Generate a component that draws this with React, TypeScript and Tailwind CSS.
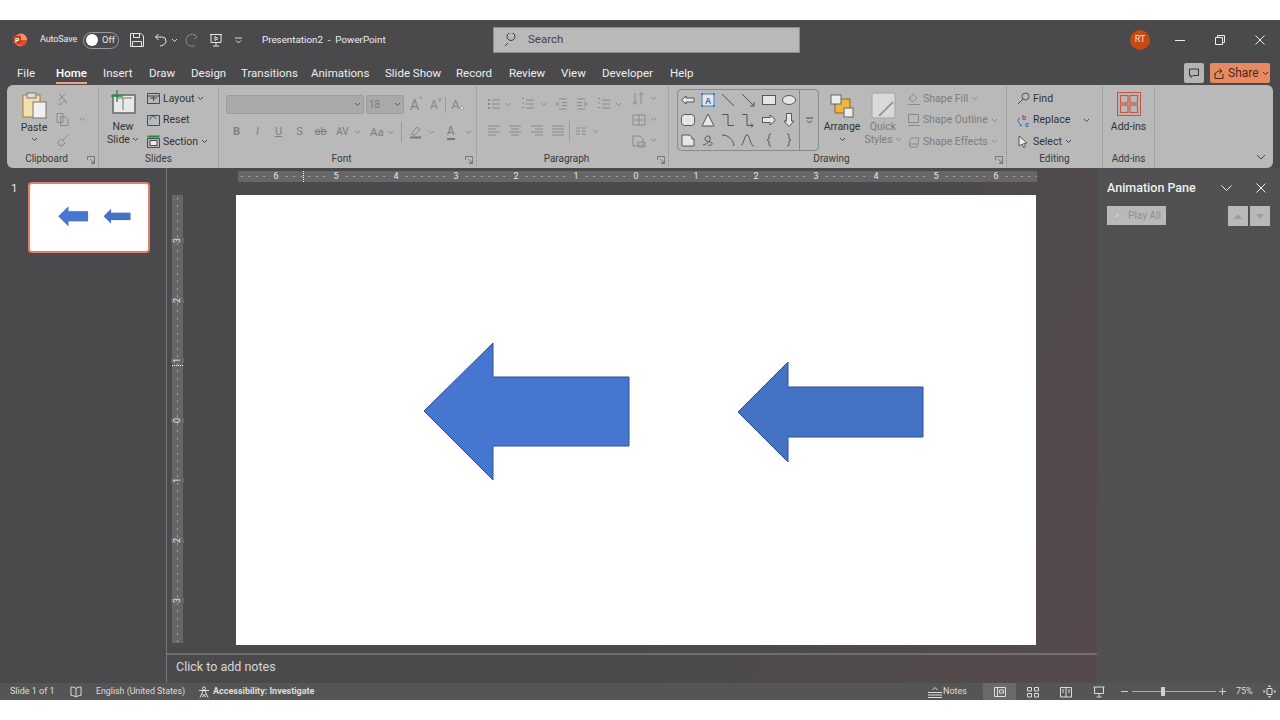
import React from "react";

const D = "#8a8a8a";
const Ic = ({ s = 14, h, c = "#4a4a4a", children, className = "" }: any) => (
  <svg width={s} height={h ?? s} viewBox={`0 0 ${s} ${h ?? s}`} fill="none" stroke={c} strokeWidth={1} className={"shrink-0 " + className}>
    {children}
  </svg>
);
const Chev = ({ c = "#4a4a4a", className = "" }: any) => (
  <svg width="7" height="5" viewBox="0 0 7 5" fill="none" stroke={c} strokeWidth={1} className={"shrink-0 " + className}>
    <path d="M1 1l2.500 2.500L6 1" />
  </svg>
);
const Arrows = () => (
  <svg viewBox="0 0 800 450" className="w-full h-full block">
    <path d="M188 216L257 148V182H393V251H257V285Z" fill="#4676cf" stroke="#2f528f" strokeWidth={1} />
    <path d="M502 217L552 167V192H687V242H552V267Z" fill="#4472c4" stroke="#2f528f" strokeWidth={1} />
  </svg>
);

const Launcher = () => (
  <svg width="8" height="8" viewBox="0 0 8 8" fill="none" stroke="#6a6a6a" strokeWidth={0.8} className="absolute right-[3px] bottom-[3px]">
    <path d="M.5 4V.5H7.500V7.500H4M3 3L7 7M7 4.500V7H4.500" />
  </svg>
);

const Group = ({ w, title, launcher, children, className = "" }: any) => (
  <div className={"relative h-full flex flex-col shrink-0 border-r border-dotted border-[#8f8f8f] " + w}>
    <div className={"flex-1 min-h-0 flex " + className}>{children}</div>
    <div className={"h-[15px] shrink-0 text-center text-[10px] leading-[14px] text-[#3a3a3a] " + (launcher ? "pr-[12px]" : "")}>{title}</div>
    {launcher && <Launcher />}
  </div>
);

const tabs = [
  ["File", "w-[39px]"],
  ["Home", "w-[47px]"],
  ["Insert", "w-[46px]"],
  ["Draw", "w-[42px]"],
  ["Design", "w-[50px]"],
  ["Transitions", "w-[70px]"],
  ["Animations", "w-[74px]"],
  ["Slide Show", "w-[71px]"],
  ["Record", "w-[53px]"],
  ["Review", "w-[52px]"],
  ["View", "w-[41px]"],
  ["Developer", "w-[68px]"],
  ["Help", "w-[30px]"],
];

const SmallRow = ({ icon, label, disabled, chev = true }: any) => (
  <div className="h-[21.5px] pt-[2px] flex items-center">
    <div className="w-[16px] flex justify-start">{icon}</div>
    <span className={"text-[10.5px] whitespace-nowrap " + (disabled ? "text-[#7d7d7d]" : "text-[#333]")}>{label}</span>
    {chev && <Chev c={disabled ? D : "#4a4a4a"} className="ml-[3px]" />}
  </div>
);

const ListIcon = ({ num }: any) => (
  <Ic s={14} c={D}>
    <path d="M5 3h8M5 7h8M5 11h8" />
    {num ? <path d="M1 1.500h2M1 6h2M1 10.500h2" /> : <path d="M1 3h2M1 7h2M1 11h2" strokeWidth={1.8} />}
  </Ic>
);
const Align = ({ d }: any) => (
  <Ic s={14} c={D}><path d={d} /></Ic>
);

const shapes: React.ReactNode[] = [
  <path d="M1.500 8L6 4v2h8v4H6v2z" fill="#e6e6e6" />,
  <g>
    <rect x="2" y="2" width="12" height="12" fill="#e6e6e6" stroke="#2b7cd3" />
    <text x="5" y="11.500" fontSize="8.500" fontWeight="700" fill="#2b6cb8" stroke="none" fontFamily="Liberation Sans">A</text>
    <path d="M1 1h2v2H1zM13 1h2v2h-2zM1 13h2v2H1zM13 13h2v2h-2z" fill="#2b7cd3" stroke="none" />
  </g>,
  <path d="M2 2l12 12" />,
  <path d="M2 2l12 12M10 14h4v-4" />,
  <rect x="1.500" y="3.500" width="13" height="9" fill="#e6e6e6" />,
  <ellipse cx="8" cy="8" rx="6.500" ry="4.500" fill="#e6e6e6" />,
  <rect x="1.500" y="2.500" width="13" height="11" rx="3" fill="#e6e6e6" />,
  <path d="M8 2l6 12H2z" fill="#e6e6e6" />,
  <path d="M2 2.500h6v11h6" />,
  <path d="M2 2.500h5v11h6M11 11.500l2 2-2 2" />,
  <path d="M1.500 5.500H9V3l5.500 5L9 13v-2.500H1.500z" fill="#e6e6e6" />,
  <path d="M5.500 1.500h5V9H13l-5 5.500L3 9h2.500z" fill="#e6e6e6" />,
  <path d="M2 14V3h6c3 0 4 2 4 4h2v7z" fill="#e6e6e6" />,
  <path d="M3 13c5-1 8-5 7-8-1-2-5-1-5 2s6 2 7 4-2 3-4 2" />,
  <path d="M2 3c6 0 11 4 12 11" />,
  <path d="M1 13c3 0 3-10 6-10s3 11 7 11" />,
  <path d="M10 2C8 2 8 3 8 4v2c0 1-1 2-2 2 1 0 2 1 2 2v2c0 1 0 2 2 2" />,
  <path d="M6 2c2 0 2 1 2 2v2c0 1 1 2 2 2-1 0-2 1-2 2v2c0 1 0 2-2 2" />,
];

const Ruler = () => (
  <div className="ml-[71px] w-[799px] h-[11px] bg-[#666666] relative flex pl-[8px]">
    <div className="absolute inset-0 bg-[radial-gradient(circle,#a8a8a8_0.6px,transparent_1px)] bg-[length:7.500px_11px]" />
    {[6, 5, 4, 3, 2, 1, 0, 1, 2, 3, 4, 5, 6].map((n, i) => (
      <div key={i} className="relative w-[60px] h-[11px] flex justify-center items-center">
        <span className="bg-[#666666] px-[2px] text-[9px] leading-[11px] text-[#e8e8e8]">{n}</span>
      </div>
    ))}
    <div className="absolute left-[65px] top-0 h-[11px] border-l border-dotted border-white" />
  </div>
);

const VRuler = () => (
  <div className="w-[11px] h-[448px] bg-[#666666] relative flex flex-col items-center pt-[15px]">
    <div className="absolute inset-0 bg-[radial-gradient(circle,#a8a8a8_0.6px,transparent_1px)] bg-[length:11px_7.500px]" />
    {[3, 2, 1, 0, 1, 2, 3].map((n, i) => (
      <div key={i} className="relative h-[60px] w-[11px] shrink-0 flex justify-center items-center">
        <span className="bg-[#666666] py-[2px] -rotate-90 text-[9px] leading-[9px] text-[#e8e8e8]">{n}</span>
      </div>
    ))}
    <div className="absolute top-[170px] left-0 w-[11px] border-t border-dotted border-white" />
  </div>
);

export default function App() {
  return (
    <div className="w-[1280px] h-[720px] overflow-hidden bg-white flex flex-col pt-[20px] pb-[20px] font-['Roboto',sans-serif]">
      <div className="flex-1 min-h-0 flex flex-col bg-[#4a4a4d]">
        {/* Title bar */}
        <div className="h-[40px] shrink-0 flex items-center text-[#eeeeee]">
          <div className="w-[493px] shrink-0 flex items-center pl-[13px]">
            <svg width="14" height="14" viewBox="0 0 14 14" className="shrink-0">
              <circle cx="7.500" cy="7" r="6.500" fill="#ed6c47" />
              <path d="M7.500.5a6.500 6.500 0 016.500 6.500H7.500z" fill="#ff8f6b" />
              <path d="M7.500 7H14a6.500 6.500 0 01-6.500 6.500z" fill="#d35230" />
              <rect x="0" y="3" width="8" height="8" rx="1" fill="#c43e1c" />
              <text x="2" y="9.500" fontSize="6.500" fontWeight="700" fill="#fff" fontFamily="Liberation Sans">P</text>
            </svg>
            <span className="ml-[13px] w-[37px] text-[9px] tracking-[-0.1px] whitespace-nowrap">AutoSave</span>
            <div className="ml-[6px] w-[36px] h-[17px] rounded-full border border-[#9a9a9a] flex items-center pl-[2px]">
              <div className="w-[12px] h-[12px] rounded-full bg-white" />
              <span className="ml-[4px] text-[9.5px] text-[#e5e5e5]">Off</span>
            </div>
            <Ic s={14} c="#e6e6e6" className="ml-[11px]"><path d="M.5.5h10.500l2.500 2.500v10.500H.5zM3.500.5v4h6v-4M2.500 13.500v-5h9v5" /></Ic>
            <Ic s={14} c="#e6e6e6" className="ml-[10px]"><path d="M4.500 1L1.500 4l3 3M1.500 4H8a4 4 0 014 4c0 3-3 4.500-6 5" /></Ic>
            <Chev c="#dcdcdc" className="ml-[3px]" />
            <Ic s={14} c="#8b8b8b" className="ml-[7px]"><path d="M9 1l3 3-3 2M12 4A6 6 0 104 12.500a6 6 0 006 0" /></Ic>
            <Ic s={14} c="#e6e6e6" className="ml-[10px]"><path d="M1 1.500h12M2 1.500v8h10v-8M7 9.500v3M4 13h6M6 3.500v4l3-2z" /></Ic>
            <svg width="7" height="7" viewBox="0 0 7 7" fill="none" stroke="#dcdcdc" className="ml-[12px] shrink-0"><path d="M0 1h7M1 3.500l2.500 2.500L6 3.500" /></svg>
            <span className="ml-[20px] text-[9.8px] whitespace-pre">Presentation2  -  PowerPoint</span>
          </div>
          <div className="w-[307px] h-[26px] shrink-0 bg-[#b9b9b9] border border-[#8c8c8c] flex items-center pl-[11px]">
            <Ic s={14} c="#3c3c3c"><path d="M13 1.500a4 4 0 100 .01M6 8L1.500 12.500" transform="translate(-3 2)" /></Ic>
            <span className="ml-[9px] text-[11.5px] text-[#444]">Search</span>
          </div>
          <div className="flex-1" />
          <div className="w-[20px] h-[20px] rounded-full bg-[#c8490f] flex items-center justify-center text-[9px] text-[#f5e5dc]">RT</div>
          <div className="ml-[25px] w-[10px] h-[1px] bg-[#eee]" />
          <Ic s={10} c="#eee" className="ml-[30px]"><path d="M.5 2.500h7v7h-7zM2.500 2.500v-2h7v7h-2" /></Ic>
          <Ic s={10} c="#eee" className="ml-[30px] mr-[15px]"><path d="M.5.5l9 9M9.500.5l-9 9" /></Ic>
        </div>
        {/* Tabs */}
        <div className="h-[25px] shrink-0 flex items-start relative text-[11.5px] leading-[27px] text-[#eeeeee]">
          <div className="flex pl-[17px]">
            {tabs.map(([t, w]) => (
              <div key={t} className={"h-[24px] whitespace-nowrap " + w}>
                <div className={"inline-block h-[24px] " + (t === "Home" ? "font-medium text-white border-b-2 border-[#f0a08a]" : "")}>{t}</div>
              </div>
            ))}
          </div>
          <div className="flex-1" />
          <div className="w-[20px] h-[20px] mt-[3px] bg-[#b4b4b4] rounded-[2px] flex items-center justify-center">
            <Ic s={12} c="#333"><path d="M1.500 2h9v6.500H5L3 10.500v-2H1.500z" /></Ic>
          </div>
          <div className="ml-[6px] mr-[10px] w-[60px] h-[20px] mt-[3px] bg-[#e58a63] rounded-[2px] flex items-center pl-[4px] text-[#4a2a1c] text-[12px]">
            <Ic s={11} c="#4a2a1c"><path d="M1 5v5.500h8V6M1 6.500C2 3.500 4 3 7 3M5.500.5L8 3 5.500 5.500" /></Ic>
            <span className="ml-[3px] leading-[20px]">Share</span>
            <Chev c="#4a2a1c" className="ml-[3px]" />
          </div>
        </div>
        {/* Ribbon */}
        <div className="h-[83px] shrink-0 mx-[7px] bg-[#b9b9b9] rounded-[6px] flex pt-[2px] pb-[1px] text-[#333] relative">
          <Group w="w-[92px]" title="Clipboard" launcher className="pl-[14px]">
            <div className="w-[26px] flex flex-col items-center">
              <svg width="25" height="27" viewBox="0 0 25 27" className="mt-[5px] shrink-0" fill="none">
                <rect x="1" y="3" width="17" height="22" fill="#f3dfae" stroke="#a87f2c" />
                <rect x="5" y="1" width="9" height="5" fill="#dcdcdc" stroke="#777" />
                <rect x="11" y="10" width="13" height="16" fill="#f0f0f0" stroke="#777" />
              </svg>
              <span className="text-[10.5px] mt-[2px] leading-[14px]">Paste</span>
              <Chev className="mt-[2px]" />
            </div>
            <div className="ml-[9px] flex flex-col pt-[1px]">
              <div className="h-[21px] flex items-center"><Ic s={12} c={D}><path d="M3 .5l6 7M9 .5l-6 7M2.500 10.500a1.500 1.500 0 102-1.500M9.500 10.500a1.500 1.500 0 10-2-1.500" /></Ic></div>
              <div className="h-[21px] flex items-center"><Ic s={13} c={D}><path d="M1 .5h6v9H1zM4.500 3.500H9l3 3v6H4.500z" /></Ic><Chev c={D} className="ml-[10px]" /></div>
              <div className="h-[21px] flex items-center"><Ic s={13} c={D}><path d="M12 1L7 6M2 8l3-3 4 4-3 3-1-1-1 1-1-1 0-1-1 0z" /></Ic></div>
            </div>
          </Group>
          <Group w="w-[120px]" title="Slides" className="pl-[10px]">
            <div className="w-[28px] flex flex-col items-center">
              <svg width="26" height="25" viewBox="0 0 26 25" className="mt-[3px] shrink-0" fill="none">
                <rect x="3" y="5" width="22" height="18" fill="#e9e9e9" stroke="#666" strokeWidth="1.500" />
                <path d="M13 8v12M6 8h16" stroke="#777" />
                <path d="M7 0v12M1 6h12" stroke="#1e8a3c" strokeWidth="1.300" />
              </svg>
              <span className="text-[10.5px] mt-[5px] leading-[13px]">New</span>
              <span className="text-[10.5px] leading-[13px] flex items-center whitespace-nowrap">Slide<Chev className="ml-[2px]" /></span>
            </div>
            <div className="ml-[10px] flex flex-col">
              <SmallRow label="Layout" icon={<Ic s={13} h={11}><path d="M.5.5h12v10H.5zM.5 3h12M6.500 3v5M3 5h7" /></Ic>} />
              <SmallRow label="Reset" chev={false} icon={<Ic s={13} h={11}><path d="M.5.5h12v10H.5z" /><path d="M3 5a3 3 0 016-1" stroke="#2b6cb8" /></Ic>} />
              <SmallRow label="Section" icon={<Ic s={13} h={13}><path d="M.5 3.500h12v9H.5z" /><path d="M.5 1.500h12" stroke="#1e8a3c" strokeWidth={2} /><rect x="3" y="5.500" width="7" height="5" fill="#e9e9e9" /></Ic>} />
            </div>
          </Group>
          <Group w="w-[258px]" title="Font" launcher className="pl-[7px] flex-col">
            <div className="flex items-center pt-[8px]">
              <div className="w-[138px] h-[19px] bg-[#a9a9a9] border border-[#9b9b9b] rounded-[2px] flex items-center justify-end pr-[2px]"><Chev c="#555" /></div>
              <div className="ml-[2px] w-[38px] h-[19px] bg-[#a9a9a9] border border-[#9b9b9b] rounded-[2px] flex items-center pl-[2px] text-[10px] text-[#7d7d7d] justify-between pr-[2px]">18<Chev c="#555" /></div>
              <span className="ml-[6px] text-[14px] text-[#858585] leading-[16px]">A</span><span className="text-[7px] text-[#858585] -mt-[8px]">^</span>
              <span className="ml-[8px] text-[12px] text-[#858585] leading-[16px]">A</span><span className="text-[7px] text-[#858585] -mt-[8px]">v</span>
              <div className="ml-[4px] h-[16px] w-[1px] bg-[#9a9a9a]" />
              <span className="ml-[5px] text-[13px] text-[#858585] leading-[16px]">A</span>
              <svg width="6" height="6" viewBox="0 0 6 6" className="-ml-[1px] mt-[6px]"><path d="M1 3l2-2 2 2-2 2z" fill="#dcdcdc" stroke="#858585" strokeWidth={0.6} /></svg>
            </div>
            <div className="flex items-center mt-[8px] text-[11px] text-[#7d7d7d] leading-[16px]">
              <span className="w-[21px] font-bold text-center">B</span>
              <span className="w-[21px] italic text-center">I</span>
              <span className="w-[21px] underline text-center">U</span>
              <span className="w-[21px] text-center">S</span>
              <span className="w-[21px] line-through text-center">ab</span>
              <span className="w-[23px] text-center text-[10px]">AV</span>
              <Chev c={D} />
              <span className="ml-[9px] text-[11.5px]">Aa</span>
              <Chev c={D} className="ml-[3px]" />
              <div className="ml-[7px] h-[20px] w-[1px] bg-[#9a9a9a]" />
              <Ic s={14} c={D} className="ml-[7px]"><path d="M3 8l5-6 3 2-5 6H3z" /><path d="M1 12.500h11" strokeWidth={2} stroke="#777" /></Ic>
              <Chev c={D} className="ml-[5px]" />
              <span className="ml-[12px] text-[12px] border-b-2 border-[#777] leading-[13px]">A</span>
              <Chev c={D} className="ml-[10px]" />
            </div>
          </Group>
          <Group w="w-[192px]" title="Paragraph" launcher className="pl-[10px]">
            <div className="flex flex-col w-[145px]">
              <div className="flex items-center mt-[10px]">
                <ListIcon /><Chev c={D} className="ml-[4px]" />
                <div className="w-[9px]" />
                <ListIcon num /><Chev c={D} className="ml-[5px]" />
                <div className="w-[7px]" />
                <Align d="M5 2h8M8 5.500h5M8 8.500h5M5 12h8M5 5l-3 2 3 2" />
                <div className="w-[8px]" />
                <Align d="M1 2h8M1 5.500h5M1 8.500h5M1 12h8M8 5l3 2-3 2" />
                <div className="w-[7px]" />
                <ListIcon num /><Chev c={D} className="ml-[4px]" />
              </div>
              <div className="flex items-center mt-[10px]">
                <Align d="M1 2h12M1 5h8M1 8h12M1 11h8" /><div className="w-[7px]" />
                <Align d="M1 2h12M3 5h8M1 8h12M3 11h8" /><div className="w-[8px]" />
                <Align d="M1 2h12M5 5h8M1 8h12M5 11h8" /><div className="w-[7px]" />
                <Align d="M1 2h12M1 5h12M1 8h12M1 11h12" />
                <div className="ml-[4px] h-[20px] w-[1px] bg-[#9a9a9a]" />
                <Ic s={12} c={D} className="ml-[5px]"><path d="M1 3h4M1 6h4M1 9h4M7 3h4M7 6h4M7 9h4" /></Ic>
                <Chev c={D} className="ml-[5px]" />
              </div>
            </div>
            <div className="flex flex-col pt-[1px]">
              <div className="h-[21px] flex items-center"><Ic s={14} c={D}><path d="M3 1v11M1 10l2 2.500L5 10M9 1v11M7 3l2-2.500L11 3" /></Ic><Chev c={D} className="ml-[4px]" /></div>
              <div className="h-[21px] flex items-center"><Ic s={14} c={D}><path d="M1 2h12v10H1zM7 2v10M3 7h8" /></Ic><Chev c={D} className="ml-[4px]" /></div>
              <div className="h-[21px] flex items-center"><Ic s={14} c={D}><path d="M1 2h7l3 3v7H1zM6 8h7v5H6z" /></Ic><Chev c={D} className="ml-[4px]" /></div>
            </div>
          </Group>
          <Group w="w-[338px]" title="Drawing" launcher className="pl-[8px]">
            <div className="h-[62px] w-[142px] mt-[2px] shrink-0 rounded-[4px] border border-[#8a8a8a] flex">
              <div className="w-[121px] grid grid-cols-6 grid-rows-3">
                {shapes.map((p, i) => (
                  <div key={i} className="w-[20px] h-[20px] flex items-center justify-center">
                    <svg width="16" height="16" viewBox="0 0 16 16" fill="none" stroke="#4a4a4a" strokeWidth={0.9}>{p}</svg>
                  </div>
                ))}
              </div>
              <div className="flex-1 border-l border-[#8a8a8a] flex items-center justify-center">
                <svg width="7" height="7" viewBox="0 0 7 7" fill="none" stroke="#4a4a4a"><path d="M0 1h7M1 3.500l2.500 2.500L6 3.500" /></svg>
              </div>
            </div>
            <div className="ml-[2px] w-[42px] flex flex-col items-center">
              <svg width="24" height="24" viewBox="0 0 24 24" className="mt-[7px] shrink-0" fill="none">
                <rect x="5" y="5" width="15" height="14" fill="#f0b53e" stroke="#8a6a20" />
                <rect x="1" y="1" width="10" height="9" fill="#ececec" stroke="#666" />
                <rect x="14" y="14" width="9" height="9" fill="#ececec" stroke="#666" />
              </svg>
              <span className="text-[10.5px] mt-[2px] leading-[13px]">Arrange</span>
              <Chev className="mt-[4px]" />
            </div>
            <div className="w-[40px] flex flex-col items-center">
              <svg width="25" height="27" viewBox="0 0 25 27" className="mt-[5px] shrink-0" fill="none">
                <rect x="1" y="1" width="23" height="25" rx="2" fill="#d9d9d9" stroke="#a3a3a3" />
                <path d="M8 24L22 10" stroke="#9a9a9a" strokeWidth="2" />
              </svg>
              <span className="text-[10.5px] mt-[1px] leading-[13px] text-[#7d7d7d]">Quick</span>
              <span className="text-[10.5px] leading-[13px] flex items-center text-[#7d7d7d]">Styles<Chev c={D} className="ml-[2px]" /></span>
            </div>
            <div className="ml-[4px] flex flex-col">
              <SmallRow disabled label="Shape Fill" icon={<Ic s={14} c={D}><path d="M2 7l4-5 4 4-4 4zM1 12.500h12" /></Ic>} />
              <SmallRow disabled label="Shape Outline" icon={<Ic s={14} c={D}><path d="M1.500 1.500h10v8h-10zM1 12.500h12" /></Ic>} />
              <SmallRow disabled label="Shape Effects" icon={<Ic s={14} c={D}><path d="M4 3h8l-1 6H2zM2 9l1 3h7l1-3" /></Ic>} />
            </div>
          </Group>
          <Group w="w-[96px]" title="Editing" className="pl-[10px]">
            <div className="flex flex-col">
              <SmallRow chev={false} label="Find" icon={<Ic s={13} c="#555"><circle cx="8.500" cy="4.500" r="3.500" /><path d="M6 7L1 12" /></Ic>} />
              <div className="flex items-center">
                <SmallRow chev={false} label="Replace" icon={
                  <Ic s={13} c="#2b6cb8">
                    <path d="M3 4a3 3 0 00-1 5l2 2M3 11.500h2" />
                    <text x="5" y="6" fontSize="7" fontWeight="700" fill="#a33a9a" stroke="none" fontFamily="Liberation Sans">b</text>
                    <text x="8" y="12.500" fontSize="7" fontWeight="700" fill="#2b6cb8" stroke="none" fontFamily="Liberation Sans">c</text>
                  </Ic>
                } />
                <Chev className="ml-[13px] mt-[2px]" />
              </div>
              <SmallRow label="Select" icon={<Ic s={13} c="#555"><path d="M2 1v10l3-2 2 4 1.500-1-2-3.500 3.500-.5z" fill="#eee" /></Ic>} />
            </div>
          </Group>
          <Group w="w-[52px]" title="Add-ins" className="flex-col items-center">
            <svg width="24" height="24" viewBox="0 0 24 24" className="mt-[5px] shrink-0" fill="none" stroke="#c8543a" strokeWidth="1.100">
              <rect x=".5" y=".5" width="23" height="23" />
              <rect x="3.500" y="3.500" width="7.500" height="7.500" />
              <rect x="13" y="3.500" width="7.500" height="7.500" />
              <rect x="3.500" y="13" width="7.500" height="7.500" />
              <rect x="13" y="13" width="7.500" height="7.500" />
            </svg>
            <span className="text-[10.5px] mt-[4px] leading-[13px] whitespace-nowrap">Add-ins</span>
          </Group>
          <div className="flex-1 flex items-end justify-end pr-[7px] pb-[7px]">
            <svg width="10" height="6" viewBox="0 0 10 6" fill="none" stroke="#444"><path d="M1 1l4 4 4-4" /></svg>
          </div>
        </div>
        {/* Main */}
        <div className="flex-1 min-h-0 flex">
          <div className="w-[167px] shrink-0 border-r border-[#777] flex items-start pt-[14px] pl-[10px]">
            <span className="w-[18px] pl-[1px] text-[11.5px] leading-[12px] text-[#e5e5e5]">1</span>
            <div className="w-[122px] h-[71px] border-2 border-[#e0806a] rounded-[4px] bg-white p-[1px]">
              <Arrows />
            </div>
          </div>
          <div className="w-[930px] shrink-0 flex flex-col pt-[3px] bg-[linear-gradient(115deg,#4a4a4d_60%,#56494b_100%)]">
            <Ruler />
            <div className="flex mt-[13px]">
              <div className="ml-[5px]"><VRuler /></div>
              <div className="ml-[53px] w-[800px] h-[450px] bg-white"><Arrows /></div>
            </div>
            <div className="mt-[8px] h-[2px] bg-[#6f6f6f]" />
            <div className="flex-1 flex items-center pl-[9px] pb-[3px] text-[12.5px] text-[#d8d8d8]">Click to add notes</div>
          </div>
          <div className="flex-1 bg-[#515151] flex flex-col pt-[10px] px-[10px]">
            <div className="h-[20px] flex items-center">
              <span className="text-[12.5px] font-medium text-[#efefef] whitespace-nowrap">Animation Pane</span>
              <div className="flex-1" />
              <svg width="11" height="7" viewBox="0 0 11 7" fill="none" stroke="#efefef"><path d="M.5.5l5 5 5-5" /></svg>
              <Ic s={10} c="#efefef" className="ml-[24px] mr-[4px]"><path d="M.5.5l9 9M9.500.5l-9 9" /></Ic>
            </div>
            <div className="mt-[8px] flex">
              <div className="w-[59px] h-[19px] bg-[#b9b9b9] flex items-center justify-between pl-[7px] pr-[5px] text-[10px] text-[#8f8f8f]">
                <svg width="8" height="9" viewBox="0 0 8 9"><path d="M1 .5l6 4-6 4z" fill="#c8c8c8" stroke="#a8a8a8" strokeWidth={0.6} /></svg>
                Play All
              </div>
              <div className="flex-1" />
              <div className="w-[20px] h-[20px] bg-[#b9b9b9] flex items-center justify-center"><svg width="8" height="5" viewBox="0 0 8 5"><path d="M0 5l4-5 4 5z" fill="#9c9c9c" /></svg></div>
              <div className="ml-[2px] w-[20px] h-[20px] bg-[#b9b9b9] flex items-center justify-center"><svg width="8" height="5" viewBox="0 0 8 5"><path d="M0 0l4 5 4-5z" fill="#9c9c9c" /></svg></div>
            </div>
          </div>
        </div>
        {/* Status */}
        <div className="h-[17px] shrink-0 bg-[#555555] flex items-center text-[9px] text-[#dddddd]">
          <span className="ml-[10px] w-[44px] whitespace-nowrap">Slide 1 of 1</span>
          <Ic s={12} c="#ddd" className="ml-[16px]"><path d="M6 2.500C5 1.500 3 1 1 1v8.500c2 0 4 .5 5 1.500 1-1 3-1.500 5-1.500V1C9 1 7 1.500 6 2.500zM6 2.500V11" /></Ic>
          <span className="ml-[14px] w-[88px] text-[8.8px] whitespace-nowrap">English (United States)</span>
          <Ic s={12} c="#ddd" className="ml-[14px]"><circle cx="6" cy="2.500" r="1.500" /><path d="M1 4.500h10M5 5l-3 6.500M7 5l3 6.500M4 8l4 3M8 8l-4 3" /></Ic>
          <span className="ml-[3px] font-bold">Accessibility: Investigate</span>
          <div className="flex-1" />
          <Ic s={14} h={12} c="#ddd"><path d="M0 6.500h14M0 9h14M0 11.500h14M4.500 4l2.500-2.500L9.500 4" /></Ic>
          <span className="ml-[1px] w-[40px]">Notes</span>
          <div className="w-[33px] h-[17px] bg-[#6a6a6a] flex items-center justify-center"><Ic s={12} c="#ddd"><path d="M.5 1.500h11v9H.5zM3.500 1.500v9M5.500 4h4v3h-4z" /></Ic></div>
          <Ic s={12} c="#ddd" className="ml-[11px]"><path d="M.5 1.500h4v3.500h-4zM7.500 1.500h4v3.500h-4zM.5 7.500h4V11h-4zM7.500 7.500h4V11h-4z" /></Ic>
          <Ic s={12} c="#ddd" className="ml-[21px]"><path d="M.5 1.500h11v9.500H.5zM6 1.500V11M2 4h2M2 6h2M8 4h2M8 6h2" /></Ic>
          <Ic s={12} c="#ddd" className="ml-[21px]"><path d="M.5 1h11M1.500 1v6.500h9V1M6 7.500v3M3.500 11h5" /></Ic>
          <div className="ml-[16px] w-[7px] h-[1px] bg-[#ccc]" />
          <div className="ml-[4px] w-[84px] h-[1px] bg-[#aaa] relative">
            <div className="absolute left-[29px] -top-[4px] w-[4px] h-[9px] bg-[#cfcfcf]" />
          </div>
          <svg width="7" height="7" viewBox="0 0 7 7" fill="none" stroke="#ccc" className="ml-[3px]"><path d="M0 3.500h7M3.500 0v7" /></svg>
          <span className="ml-[10px] w-[27px]">75%</span>
          <Ic s={13} c="#ddd"><path d="M4 3.500h5v6H4zM6.500 2L5.500 1h2zM6.500 11L5.500 12h2zM2 6.500L1 5.500v2zM11 6.500l1-1v2z" /></Ic>
          <div className="w-[4px]" />
        </div>
      </div>
    </div>
  );
}
